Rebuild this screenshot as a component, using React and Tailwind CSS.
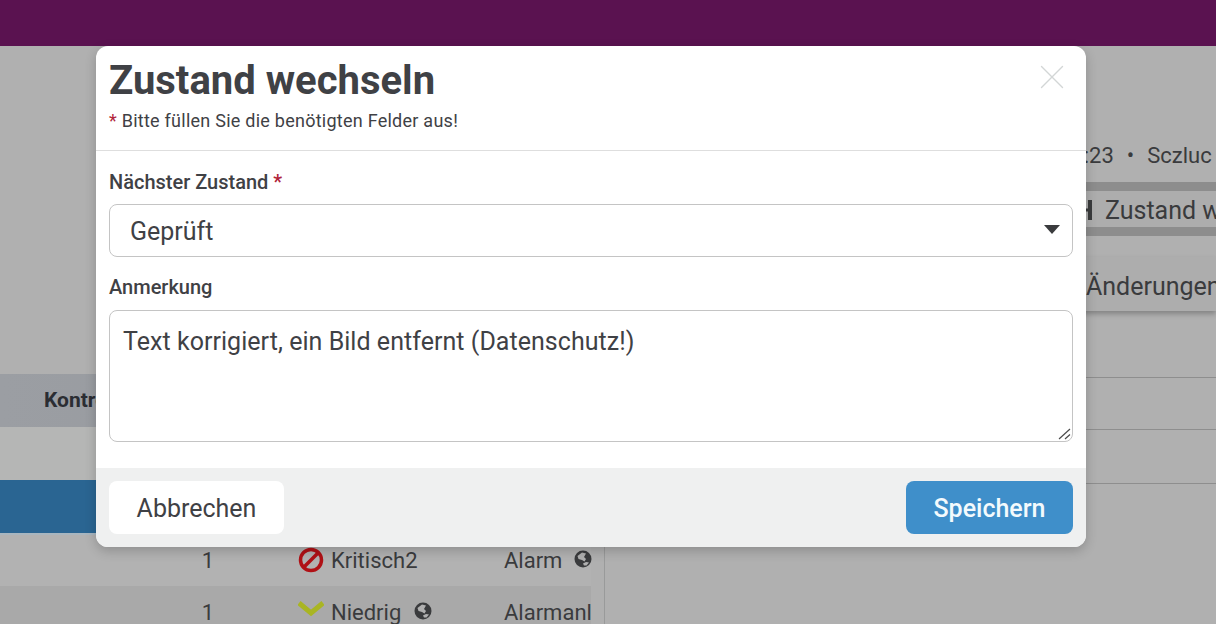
import { X } from 'lucide-react';

const font = { fontFamily: 'Roboto, sans-serif' };

// Globe glyph used next to the rule names in the table
const Globe = () => (
    <svg width="18" height="18" viewBox="0 0 18 18" className="shrink-0">
        <circle cx="9" cy="9" r="8.5" fill="#3a3b3d" />
        <path d="M3.5 6 L8 2.5 L12 3.5 L10 7 L12 9 L10.5 11.5 L8 10 L4.5 9 Z" fill="#b0b0b0" />
        <path d="M9 13.5 L12 12 L15 12.5 L12.5 15.5 L10 15.5 Z" fill="#b0b0b0" />
    </svg>
);

const Background = () => (
    <div className="flex flex-col h-[624px] overflow-hidden bg-[#b0b0b0] text-[#3a3b3d]">
        <div className="h-[46px] shrink-0 bg-[#5a1250]" />
        <div className="flex flex-1 min-h-0">
            {/* table side */}
            <div className="w-[605px] shrink-0 border-r border-[#999a9a] pt-[328px]">
                <div className="h-[53px] flex items-center pl-[44px] bg-gradient-to-r from-[#9b9ea3] to-[#94969a] text-[21px] font-bold text-[#2b2d33]">
                    Kontrolle
                </div>
                <div className="h-[53px] bg-[#b5b6b5]" />
                <div className="h-[53px] bg-[#2a6592]" />
                <div className="h-[53px] w-[591px] flex items-center border-t-2 border-[#a9b6bf] bg-[#b2b2b2] text-[22px]">
                    <span className="w-[298px] shrink-0 pr-[84px] text-right">1</span>
                    <svg width="26" height="26" viewBox="0 0 26 26" className="mr-[7px] shrink-0 -mt-[2px]">
                        <circle cx="13" cy="13" r="10.5" fill="none" stroke="#b01116" strokeWidth="3.5" />
                        <path d="M6 20 L20 6" stroke="#b01116" strokeWidth="3.5" />
                    </svg>
                    <span className="w-[173px] shrink-0">Kritisch2</span>
                    <span>Alarm</span>
                    <span className="ml-[12px] -mt-[4px]"><Globe /></span>
                </div>
                <div className="h-[53px] w-[591px] flex items-center bg-[#a9a9a9] text-[22px] overflow-hidden">
                    <span className="w-[298px] shrink-0 pr-[84px] text-right">1</span>
                    <svg width="26" height="16" viewBox="0 0 26 16" className="mr-[7px] shrink-0 -mt-[7px]">
                        <path d="M1 2 L13 12 L25 2" fill="none" stroke="#a9b523" strokeWidth="5" />
                    </svg>
                    <span className="w-[69px] shrink-0">Niedrig</span>
                    <span className="ml-[14px] w-[90px] shrink-0 -mt-[3px]"><Globe /></span>
                    <span className="whitespace-nowrap">Alarmanlage</span>
                </div>
            </div>
            {/* detail side */}
            <div className="flex-1 min-w-0 overflow-hidden text-[22px] whitespace-nowrap">
                <div className="h-[136px] pl-[454px] pt-[95px] leading-[30px]">
                    12:23<span className="mx-[13px]">•</span>Sczluc
                </div>
                <div className="h-[54px] border-y-[9px] border-[#8d8d8d] bg-[#adadad] flex items-center pl-[480px] pt-[2px] text-[25px] leading-none mb-[21px]">
                    <svg width="7" height="20" viewBox="0 0 7 20" className="mr-[13px] shrink-0">
                        <path d="M0 10 H5" stroke="#3a3b3d" strokeWidth="3" />
                        <path d="M5 0 V20" stroke="#3a3b3d" strokeWidth="4" />
                    </svg>
                    Zustand wechseln
                </div>
                <div className="h-[54px] bg-[#adadad] shadow-[0_3px_5px_rgba(0,0,0,0.25)] flex items-center pl-[481px] pt-[5px] text-[25px]">
                    Änderungen
                </div>
                <div className="h-[67px] border-b border-[#8e8e8e]" />
                <div className="h-[52px] border-b border-[#8e8e8e]" />
                <div className="h-[54px] border-b border-[#8e8e8e]" />
            </div>
        </div>
    </div>
);

// Dialog: Zustand wechseln
const Modal = () => (
    <div className="absolute left-[96px] top-[46px] w-[990px] h-[501px] flex flex-col bg-white rounded-[12px] overflow-hidden shadow-[0_4px_12px_rgba(0,0,0,0.2)] text-[#3f4145]">
        <div className="relative h-[105px] shrink-0 border-b border-[#dedede] px-[13px] pt-[11px]">
            <h2 className="text-[40px] leading-[48px] font-bold">Zustand wechseln</h2>
            <p className="mt-[4px] text-[18px] leading-[24px] tracking-[0.25px]">
                <span className="text-[#b0243a]">*</span> Bitte füllen Sie die benötigten Felder aus!
            </p>
            <X className="absolute right-[13px] top-[10px] text-[#d3d6d6]" size={42} strokeWidth={0.8} />
        </div>
        <div className="flex-1 px-[13px] pt-[18px]">
            <label className="block text-[20px] leading-[26px] font-medium">
                Nächster Zustand <span className="text-[#b0243a]">*</span>
            </label>
            <div className="relative mt-[9px]">
                <select
                    defaultValue="Geprüft"
                    className="block w-full h-[53px] appearance-none rounded-[8px] border border-[#c4c4c4] bg-white pl-[20px] pt-[3px] text-[25px] text-[#3f4145] outline-none"
                    style={font}
                >
                    <option>Geprüft</option>
                </select>
                <svg width="16" height="9" viewBox="0 0 16 9" className="absolute right-[13px] top-[21px]">
                    <path d="M0 0 H16 L8 9 Z" fill="#3a3b3d" />
                </svg>
            </div>
            <label className="block mt-[17px] text-[20px] leading-[26px] font-medium">Anmerkung</label>
            <div className="relative mt-[10px]">
                <textarea
                    defaultValue="Text korrigiert, ein Bild entfernt (Datenschutz!)"
                    className="block w-full h-[132px] resize-none rounded-[8px] border border-[#c4c4c4] px-[13px] py-[15px] text-[25px] tracking-[0.04px] leading-[32px] text-[#3f4145] outline-none"
                    style={font}
                />
                <svg width="13" height="12" viewBox="0 0 13 12" className="absolute right-[2px] bottom-[2px]">
                    <path d="M1 11 L12 1" stroke="#4a4a4a" strokeWidth="1.2" />
                    <path d="M7 11 L12 6.5" stroke="#4a4a4a" strokeWidth="1.2" />
                </svg>
            </div>
        </div>
        <div className="h-[79px] shrink-0 bg-[#eff0f0] flex items-center justify-between px-[13px]">
            <button className="w-[175px] h-[53px] rounded-[8px] bg-white pt-[2px] text-[25px] text-[#3f4145]">Abbrechen</button>
            <button className="w-[167px] h-[53px] rounded-[8px] bg-[#3f8fca] pt-[2px] text-[25px] font-medium text-[#f3fafd]">Speichern</button>
        </div>
    </div>
);

export default function App() {
    return (
        <div className="relative w-[1216px] h-[624px] overflow-hidden" style={font}>
            <Background />
            <Modal />
        </div>
    );
}
